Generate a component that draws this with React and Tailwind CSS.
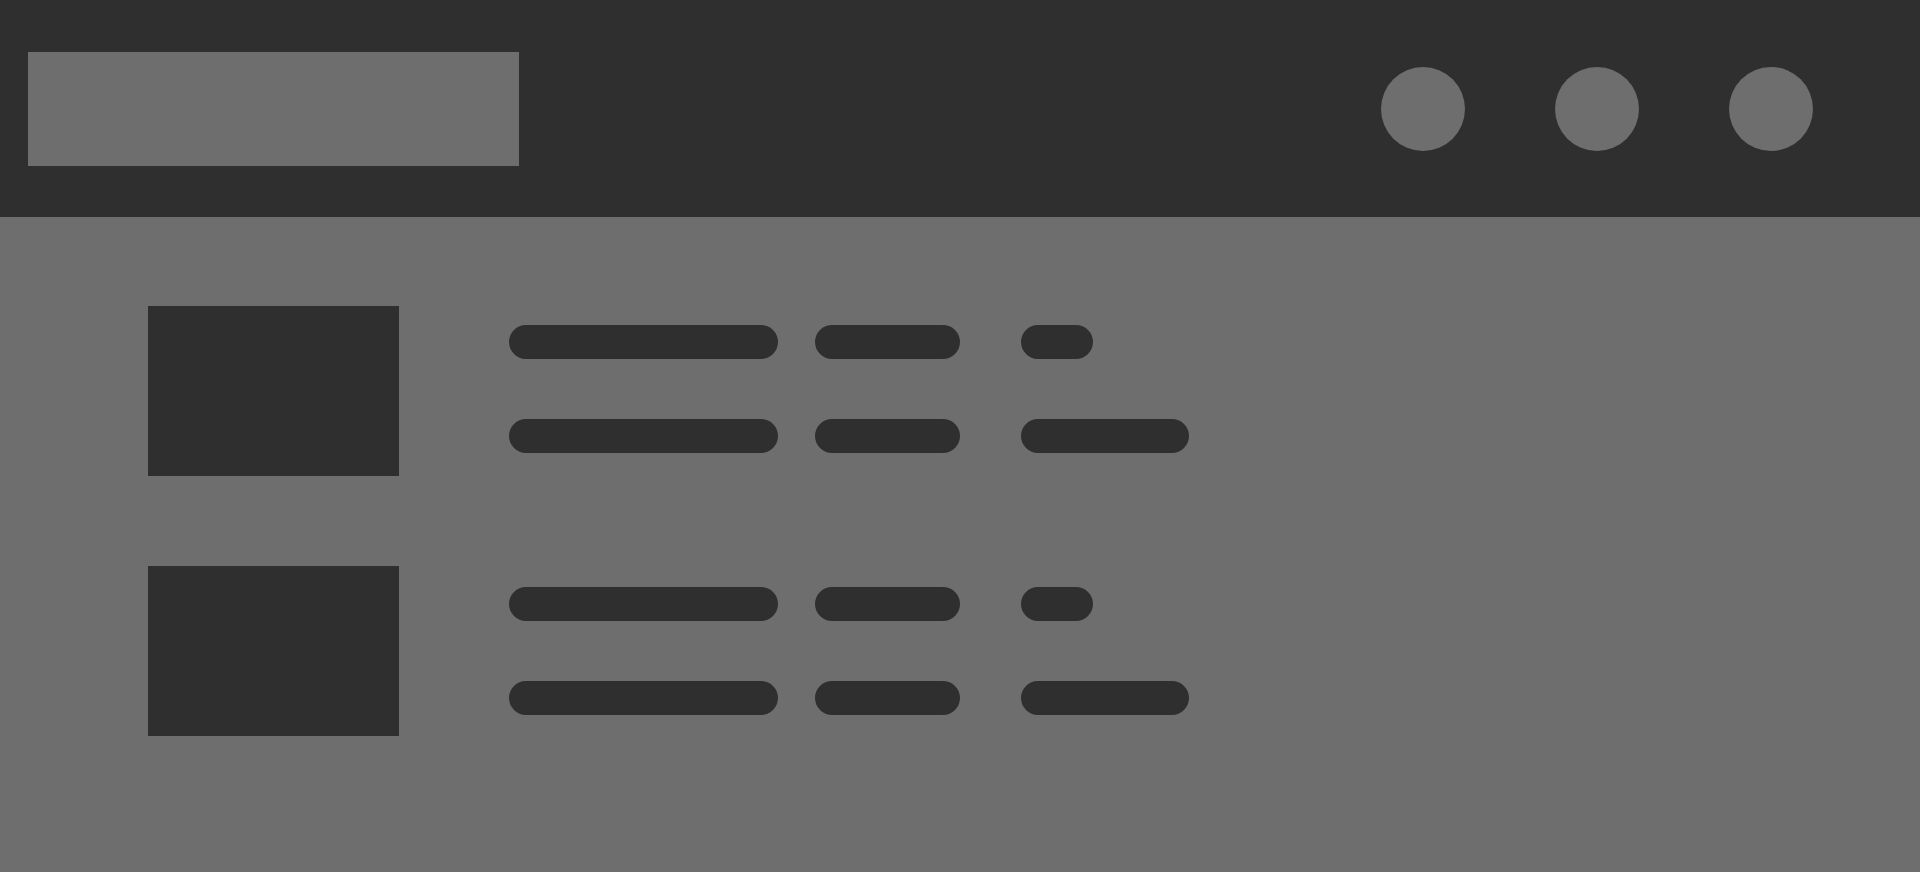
export default function App() {
  const groups = [
    {
      offset: "mt-[19px]",
      rows: [72, 168],
    },
    {
      offset: "mt-[21px]",
      rows: [72, 168],
    },
  ];

  return (
    <div className="flex h-[872px] w-full flex-col overflow-hidden bg-[#6e6e6e]">
      {/* Header */}
      <header className="flex h-[217px] shrink-0 items-center justify-between bg-[#2f2f2f] pl-[28px] pr-[107px]">
        <div className="h-[114px] w-[491px] bg-[#6e6e6e]" />
        <div className="flex items-center gap-[90px]">
          <div className="h-[84px] w-[84px] rounded-full bg-[#6e6e6e]" />
          <div className="h-[84px] w-[84px] rounded-full bg-[#6e6e6e]" />
          <div className="h-[84px] w-[84px] rounded-full bg-[#6e6e6e]" />
        </div>
      </header>

      {/* List */}
      <main className="flex flex-col gap-[90px] pl-[148px] pt-[89px]">
        {groups.map((group, i) => (
          <div key={i} className="flex items-start">
            <div className="h-[170px] w-[251px] shrink-0 bg-[#2f2f2f]" />
            <div className={`ml-[110px] flex flex-col gap-[60px] ${group.offset}`}>
              {group.rows.map((last, j) => (
                <div
                  key={j}
                  className="grid grid-cols-[306px_206px_auto] items-center"
                >
                  <div className="h-[34px] w-[269px] rounded-full bg-[#2f2f2f]" />
                  <div className="h-[34px] w-[145px] rounded-full bg-[#2f2f2f]" />
                  <div
                    className="h-[34px] rounded-full bg-[#2f2f2f]"
                    style={{ width: last }}
                  />
                </div>
              ))}
            </div>
          </div>
        ))}
      </main>
    </div>
  );
}
